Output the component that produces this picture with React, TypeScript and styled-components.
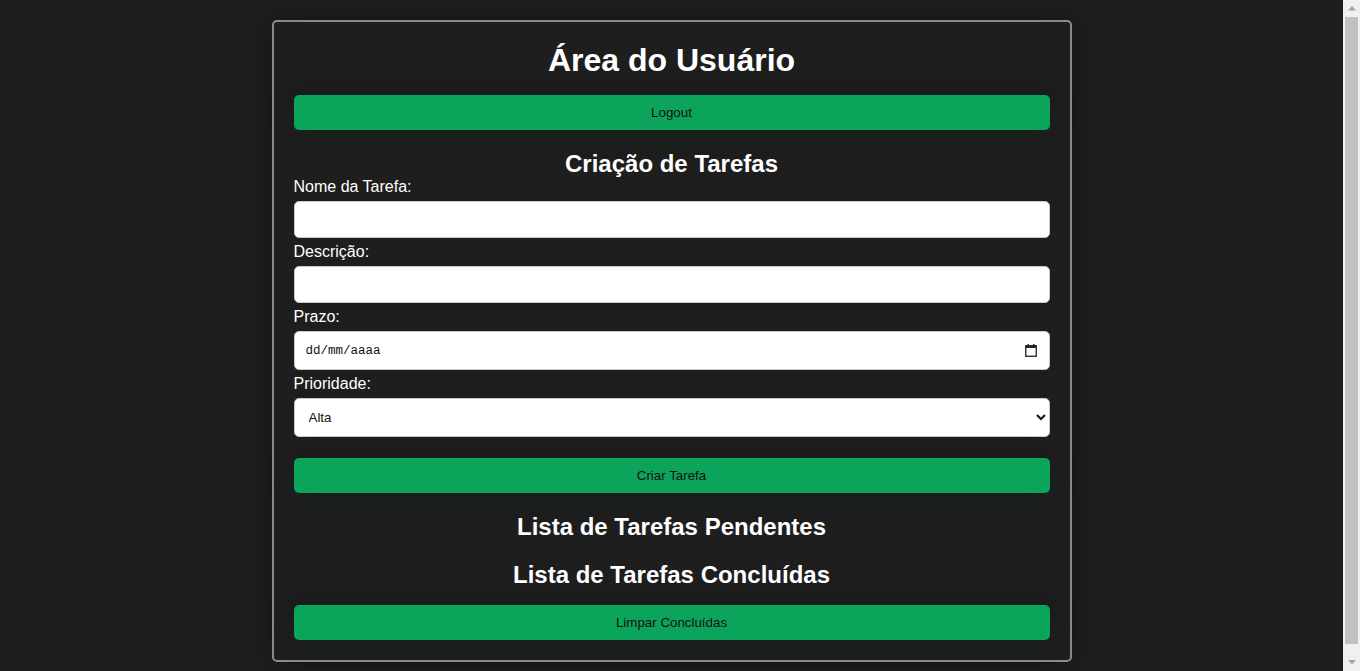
import styled, { createGlobalStyle } from "styled-components";

const GlobalStyle = createGlobalStyle`
  html, body {
    margin: 0;
    padding: 0;
    background: #1e1e1e;
    font-family: "Liberation Sans", Arial, sans-serif;
    color: #fff;
  }
  body {
    padding-right: 17px;
  }
`;

const Container = styled.div`
  width: 756px;
  margin: 20px auto;
  padding: 20px;
  border: 2px solid #8a8a8a;
  border-radius: 5px;
  background: #1e1e1e;
  box-shadow: 0 0 30px rgba(0, 0, 0, 0.35);
`;

const Title = styled.h1`
  margin: 0 0 16px;
  font-size: 32px;
  line-height: 37px;
  text-align: center;
`;

const Section = styled.h2<{ $top?: number }>`
  margin: ${(p) => p.$top ?? 20}px 0 0;
  font-size: 24px;
  line-height: 28px;
  text-align: center;
`;

const GreenButton = styled.button`
  display: block;
  width: 100%;
  height: 35px;
  border: none;
  border-radius: 5px;
  background: #0ca35b;
  color: #111;
  font-family: "Liberation Sans", Arial, sans-serif;
  font-size: 13.33px;
  cursor: pointer;
  box-shadow: 0 6px 28px rgba(12, 163, 91, 0.07), 0 0 24px rgba(0, 0, 0, 0.25);
`;

const Form = styled.form`
  display: flex;
  flex-direction: column;
`;

const Label = styled.label<{ $gap?: number }>`
  display: block;
  margin-top: ${(p) => p.$gap ?? 5}px;
  font-size: 16px;
  line-height: 18px;
`;

const TextInput = styled.input`
  box-sizing: border-box;
  width: 100%;
  height: 37px;
  margin-top: 5px;
  padding: 0 14px;
  border: 1px solid #c8c8c8;
  border-radius: 5px;
  background: #fff;
  font-size: 13.33px;
  font-family: "Liberation Sans", Arial, sans-serif;
`;

const DateBox = styled.div`
  box-sizing: border-box;
  display: flex;
  align-items: center;
  justify-content: space-between;
  width: 100%;
  height: 39px;
  margin-top: 5px;
  padding: 0 12px 0 11px;
  border: 1px solid #c8c8c8;
  border-radius: 5px;
  background: #fff;
  color: #111;
  font-family: "Liberation Mono", "DejaVu Sans Mono", monospace;
  font-size: 12.5px;
`;

const Select = styled.select`
  box-sizing: border-box;
  width: 100%;
  height: 39px;
  margin-top: 5px;
  padding: 0 10px;
  border: 1px solid #c8c8c8;
  border-radius: 5px;
  background: #fff;
  color: #111;
  font-family: "Liberation Sans", Arial, sans-serif;
  font-size: 13.33px;
`;

const SubmitRow = styled.div`
  margin-top: 21px;
`;

const BottomRow = styled.div`
  margin-top: 16px;
`;

const Scrollbar = styled.div`
  position: fixed;
  top: 0;
  right: 0;
  bottom: 0;
  width: 17px;
  display: flex;
  flex-direction: column;
  align-items: center;
  background: #f1f1f1;
`;

const ScrollArrow = styled.div`
  height: 17px;
  display: flex;
  align-items: center;
  justify-content: center;
`;

const ScrollThumb = styled.div`
  flex: 1;
  width: 13px;
  margin: 0 0 10px;
  background: #c1c1c1;
`;

const CalendarIcon = () => (
  <svg width="12" height="13" viewBox="0 0 12 13">
    <rect x="0.75" y="1.75" width="10.5" height="10.5" fill="none" stroke="#222" strokeWidth="1.3" />
    <rect x="0.75" y="1.75" width="10.5" height="2.2" fill="#222" />
    <rect x="2.5" y="0" width="1.4" height="2.5" fill="#222" />
    <rect x="8.1" y="0" width="1.4" height="2.5" fill="#222" />
  </svg>
);

const Triangle = ({ down }: { down?: boolean }) => (
  <svg width="8" height="5" viewBox="0 0 8 5">
    <polygon points={down ? "0,0 8,0 4,4.5" : "0,4.5 8,4.5 4,0"} fill="#a3a3a3" />
  </svg>
);

export default function App() {
  return (
    <>
      <GlobalStyle />
      <Container>
        <Title>Área do Usuário</Title>
        <GreenButton type="button">Logout</GreenButton>

        <Section>Criação de Tarefas</Section>
        <Form onSubmit={(e) => e.preventDefault()}>
          <Label $gap={0}>Nome da Tarefa:</Label>
          <TextInput type="text" />
          <Label>Descrição:</Label>
          <TextInput type="text" />
          <Label>Prazo:</Label>
          <DateBox>
            <span>dd/mm/aaaa</span>
            <CalendarIcon />
          </DateBox>
          <Label>Prioridade:</Label>
          <Select defaultValue="alta">
            <option value="alta">Alta</option>
            <option value="media">Média</option>
            <option value="baixa">Baixa</option>
          </Select>
          <SubmitRow>
            <GreenButton type="submit">Criar Tarefa</GreenButton>
          </SubmitRow>
        </Form>

        <Section>Lista de Tarefas Pendentes</Section>
        <Section>Lista de Tarefas Concluídas</Section>
        <BottomRow>
          <GreenButton type="button">Limpar Concluídas</GreenButton>
        </BottomRow>
      </Container>
      <Scrollbar>
        <ScrollArrow>
          <Triangle />
        </ScrollArrow>
        <ScrollThumb />
        <ScrollArrow>
          <Triangle down />
        </ScrollArrow>
      </Scrollbar>
    </>
  );
}
